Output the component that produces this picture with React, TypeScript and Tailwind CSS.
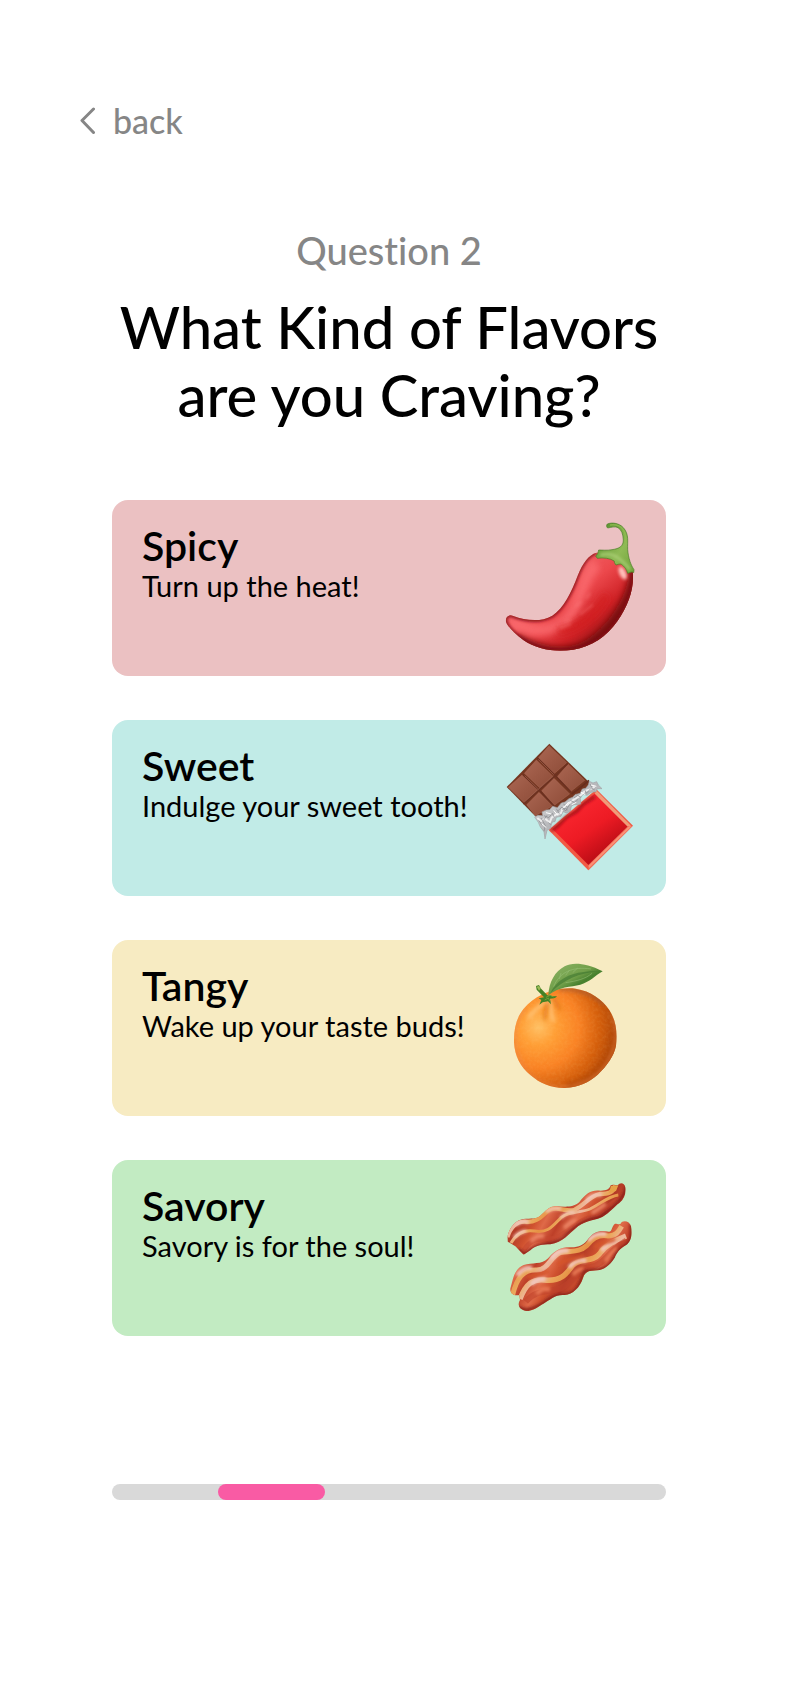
import type { ReactNode } from "react";

function Chili() {
  return (
    <svg viewBox="45 48 396 396" className="size-[132px]" aria-hidden="true">
      <defs>
        <linearGradient id="chili-body" gradientUnits="userSpaceOnUse" x1="190" y1="190" x2="370" y2="400">
          <stop offset="0" stopColor="#f4686c" />
          <stop offset=".4" stopColor="#ec484c" />
          <stop offset=".7" stopColor="#cf2226" />
          <stop offset="1" stopColor="#8c1214" />
        </linearGradient>
        <linearGradient id="chili-stem" x1="0" y1="0" x2="1" y2="1">
          <stop offset="0" stopColor="#4e8a27" />
          <stop offset=".6" stopColor="#8fba55" />
          <stop offset="1" stopColor="#6ea238" />
        </linearGradient>
        <clipPath id="chili-clip">
          <path d="M322 143C300 149 281 174 266 212C247 263 224 309 190 332C154 353 109 346 73 333C58 327 48 336 51 351C57 366 78 388 104 406C144 434 199 442 252 434C309 426 354 393 385 349C419 301 437 247 431 198C420 169 361 138 322 143Z" />
        </clipPath>
        <filter id="chili-soft" x="-30%" y="-30%" width="160%" height="160%">
          <feGaussianBlur stdDeviation="9" />
        </filter>
        <filter id="chili-edge" x="-30%" y="-30%" width="160%" height="160%">
          <feGaussianBlur stdDeviation="4" />
        </filter>
      </defs>
      <g clipPath="url(#chili-clip)">
        <path d="M30 120H450V450H30Z" fill="url(#chili-body)" />
        <path d="M80 398C140 434 200 447 259 435C328 419 430 311 438 185" fill="none" stroke="#6d0b0b" strokeWidth="30" filter="url(#chili-soft)" opacity=".85" />
        <path d="M64 350C124 381 176 386 223 350C276 310 274 222 323 177" fill="none" stroke="#fb6c70" strokeWidth="34" filter="url(#chili-soft)" opacity=".8" />
        <path d="M205 380C270 370 320 326 353 270" fill="none" stroke="#d21c1f" strokeWidth="27" filter="url(#chili-soft)" opacity=".65" />
        <path d="M259 306l18-16M274 328l38-29M226 351l20-8M213 370l34-13M292 281l12-17" fill="none" stroke="#ff8585" strokeWidth="7" filter="url(#chili-edge)" opacity=".35" />
        <ellipse cx="401" cy="204" rx="10" ry="21" transform="rotate(-25 401 204)" fill="#ffc0bb" filter="url(#chili-edge)" />
        <path d="M322 143C300 149 281 174 266 212C247 263 224 309 190 332C154 353 109 346 73 333C58 327 48 336 51 351C57 366 78 388 104 406C144 434 199 442 252 434C309 426 354 393 385 349C419 301 437 247 431 198" fill="none" stroke="#831014" strokeWidth="9" filter="url(#chili-edge)" />
      </g>
      <path d="M355 57C370 51 391 55 403 68C421 88 415 110 416 134C418 160 426 181 435 194L434 203C429 198 425 202 416 205C414 194 406 184 396 177C392 177 386 178 381 180C377 175 375 171 376 168C363 160 344 157 325 160L320 153C326 149 327 143 329 135C339 135 354 137 369 134C392 131 403 123 403 105C402 87 398 75 387 68C378 63 367 67 356 69C352 66 352 60 355 57Z" fill="url(#chili-stem)" stroke="#457b24" strokeWidth="2" />
      <path d="M334 150C357 144 376 149 389 160C403 170 414 179 422 194" fill="none" stroke="#add078" strokeWidth="7" filter="url(#chili-edge)" />
      <path d="M363 60C401 55 413 81 409 114" fill="none" stroke="#91bc51" strokeWidth="4" opacity=".8" />
    </svg>
  );
}

function Chocolate() {
  return (
    <svg viewBox="45 48 396 396" className="size-[132px]" aria-hidden="true">
      <defs>
        <linearGradient id="choc-square" x1="0" y1="0" x2="1" y2="1">
          <stop offset="0" stopColor="#aa6652" />
          <stop offset="1" stopColor="#8e4c38" />
        </linearGradient>
        <linearGradient id="choc-wrap" gradientUnits="userSpaceOnUse" x1="245" y1="240" x2="343" y2="382">
          <stop offset="0" stopColor="#fa2730" />
          <stop offset=".55" stopColor="#ed1b24" />
          <stop offset="1" stopColor="#c00e17" />
        </linearGradient>
        <linearGradient id="choc-foil" x1="0" y1="0" x2="1" y2="1">
          <stop offset="0" stopColor="#e9e9ea" />
          <stop offset=".5" stopColor="#b5b6b9" />
          <stop offset="1" stopColor="#e1e2e4" />
        </linearGradient>
        <filter id="choc-soft" x="-20%" y="-20%" width="140%" height="140%">
          <feGaussianBlur stdDeviation="4" />
        </filter>
      </defs>
      <path d="M181 56L303 174L285 205L155 290L53 186Z" fill="#753620" />
      <g fill="url(#choc-square)" stroke="#b57763" strokeWidth="1">
        <path d="M180 62L233 113L195 146L148 99Z" />
        <path d="M142 105L191 153L152 188L106 145Z" />
        <path d="M99 150L146 194L107 234L58 187Z" />
        <path d="M237 117L287 166L246 199L205 155Z" />
        <path d="M195 160L242 207L196 241L158 197Z" />
        <path d="M150 202L190 243L139 272L113 239Z" />
      </g>
      <path d="M103 237L152 193L197 154L236 116M145 98L198 151L246 201M102 149L154 199L198 246" fill="none" stroke="#6b3020" strokeWidth="4" />
      <path d="M106 231L149 192L193 153M148 103L194 149M107 152L149 193" fill="none" stroke="#a26350" strokeWidth="2" />
      <path d="M248 207L268 193L300 166" fill="none" stroke="#672d1d" strokeWidth="5" />
      <path d="M322 193L432 302L298 436L179 315Z" fill="#f25a45" />
      <path d="M322 202L418 303L299 421L191 313Z" fill="url(#choc-wrap)" />
      <path d="M323 197L426 302L416 305L317 206Z" fill="#f09b79" />
      <path d="M417 304L430 303L298 436L298 420Z" fill="#f16f58" />
      <path d="M420 304L428 304L300 429L299 422Z" fill="#fb9177" />
      <path d="M187 316L204 305L232 276L262 260L283 237L318 215" fill="none" stroke="#9d1018" strokeWidth="8" filter="url(#choc-soft)" />
      <path d="M137 276L147 271L161 272L159 261L172 255L182 254L191 244L205 248L217 234L228 231L240 221L251 217L258 209L273 205L280 192L290 190L298 180L301 169L312 174L323 170L328 180L339 191L325 191L321 200L306 202L294 211L282 208L274 220L275 237L264 239L255 239L247 244L244 258L234 264L222 260L216 274L202 277L198 290L190 291L183 311L174 316L168 342L165 320L154 306L148 292Z" fill="url(#choc-foil)" stroke="#a2a3a6" strokeWidth="2" strokeLinejoin="round" />
      <path d="M145 279L156 288L169 281L182 293L188 278L201 269L216 264L221 249L235 240L247 229L259 221L274 212L288 198L303 193L317 185" fill="none" stroke="#ededee" strokeWidth="6" strokeLinejoin="bevel" />
      <path d="M156 279L169 302L165 319M165 272L179 278L190 265L196 277M176 291L185 299M202 251L211 266M207 257L219 246L230 258L242 238M223 237L235 246M244 226L257 233L267 223M255 219L266 211L276 217M287 194L292 205L307 189L317 195M303 177L310 190M163 287L174 271M219 253L229 250L236 255M149 286L158 299" fill="none" stroke="#85868b" strokeWidth="2" strokeLinejoin="bevel" />
      <path d="M158 296L172 308M171 263L187 267M194 256L207 272M227 245L239 231M248 239L262 232M276 202L289 209M306 180L322 184" stroke="#fff" strokeWidth="3" />
    </svg>
  );
}

function Orange() {
  return (
    <svg viewBox="45 48 396 396" className="size-[132px]" aria-hidden="true">
      <defs>
        <radialGradient id="orange-skin" gradientUnits="userSpaceOnUse" cx="148" cy="247" r="245">
          <stop offset="0" stopColor="#ffc064" />
          <stop offset=".22" stopColor="#ff9e35" />
          <stop offset=".5" stopColor="#f98224" />
          <stop offset=".75" stopColor="#d45e0b" />
          <stop offset="1" stopColor="#a94308" />
        </radialGradient>
        <linearGradient id="orange-leaf" x1="0" y1="0" x2="1" y2="1">
          <stop offset="0" stopColor="#8db568" />
          <stop offset=".45" stopColor="#719f49" />
          <stop offset=".6" stopColor="#47802e" />
          <stop offset="1" stopColor="#70a850" />
        </linearGradient>
        <clipPath id="orange-clip">
          <path d="M158 149C179 139 218 126 260 131C305 138 341 164 361 195C381 226 386 262 381 302C375 333 354 362 326 389C299 413 269 426 228 429C187 430 154 416 125 391C94 366 77 333 75 292C74 248 84 215 104 191C120 172 139 157 158 149Z" />
        </clipPath>
        <filter id="orange-soft" x="-30%" y="-30%" width="160%" height="160%">
          <feGaussianBlur stdDeviation="6" />
        </filter>
        <filter id="orange-texture">
          <feTurbulence type="fractalNoise" baseFrequency=".11" numOctaves="2" seed="5" />
          <feColorMatrix values="0 0 0 0 1  0 0 0 0 .75  0 0 0 0 .35  .8 0 0 0 -.28" />
        </filter>
      </defs>
      <g clipPath="url(#orange-clip)">
        <path d="M70 120H390V435H70Z" fill="url(#orange-skin)" />
        <path d="M70 120H390V435H70Z" filter="url(#orange-texture)" opacity=".22" />
        <path d="M235 431C310 425 387 349 385 259" fill="none" stroke="#ad4300" strokeWidth="38" filter="url(#orange-soft)" opacity=".6" />
        <path d="M178 162C161 182 131 192 119 220M185 165C182 198 187 213 194 230" fill="none" stroke="#ffca82" strokeWidth="10" filter="url(#orange-soft)" />
        <path d="M176 171C173 192 165 205 168 226M192 160C204 171 202 183 215 193" fill="none" stroke="#d66913" strokeWidth="6" filter="url(#orange-soft)" />
        <path d="M111 187C65 236 64 317 112 377C154 431 248 449 323 390C374 346 397 267 370 207" fill="none" stroke="#ea884e" strokeWidth="5" filter="url(#orange-soft)" />
        <path d="M211 133C253 126 312 145 347 178" fill="none" stroke="#9c5735" strokeWidth="7" filter="url(#orange-soft)" />
      </g>
      <path d="M141 123L150 120L155 130L175 151C184 154 196 155 204 153C200 160 190 161 183 161L186 178L177 169L161 172L151 179L157 165L149 160L165 157L143 134Z" fill="#458125" />
      <path d="M143 125L150 123L155 131L150 137Z" fill="#9abb55" />
      <path d="M178 151C180 111 198 79 227 64C250 52 289 53 341 79C318 92 302 112 274 119C245 127 210 123 178 151Z" fill="url(#orange-leaf)" />
      <path d="M185 143C205 103 246 76 330 79C271 83 222 106 185 143Z" fill="#346d29" opacity=".5" />
      <path d="M194 125C210 83 250 63 306 72M230 113C263 108 289 102 309 85M211 102L216 84M230 91L241 76M251 83L266 69" fill="none" stroke="#9bc37c" strokeWidth="3" opacity=".5" />
      <path d="M171 157L183 151L194 156M167 165L178 159L183 169" fill="none" stroke="#719e37" strokeWidth="3" />
    </svg>
  );
}

function Bacon() {
  return (
    <svg viewBox="45 48 396 396" className="size-[132px]" aria-hidden="true">
      <defs>
        <linearGradient id="bacon-meat" gradientUnits="userSpaceOnUse" x1="75" y1="205" x2="165" y2="255" spreadMethod="reflect">
          <stop offset="0" stopColor="#b23a26" />
          <stop offset=".38" stopColor="#d0522f" />
          <stop offset=".62" stopColor="#df6a48" />
          <stop offset="1" stopColor="#bd3f28" />
        </linearGradient>
        <linearGradient id="bacon-fat" gradientUnits="userSpaceOnUse" x1="75" y1="180" x2="137" y2="220" spreadMethod="reflect">
          <stop offset="0" stopColor="#edb9a2" />
          <stop offset=".5" stopColor="#eba85c" />
          <stop offset="1" stopColor="#e69143" />
        </linearGradient>
        <filter id="bacon-soft" x="-20%" y="-20%" width="140%" height="140%">
          <feGaussianBlur stdDeviation="4" />
        </filter>
        <clipPath id="bacon-top">
          <path d="M55 215C61 190 76 169 95 164C116 158 139 165 153 153C171 137 180 123 204 123C225 126 254 128 271 111C292 84 308 73 335 77C352 77 361 73 365 61C373 56 379 62 386 61C393 51 406 52 409 67C412 83 406 102 391 114C376 124 364 142 341 155C319 166 293 165 267 184C239 207 222 232 184 238C161 238 141 240 125 255L104 269L79 244L56 230Z" />
        </clipPath>
        <clipPath id="bacon-bottom">
          <path d="M69 352C75 325 85 308 104 300C129 291 158 301 178 279C202 252 218 246 247 247C270 247 286 240 299 220C315 199 335 194 360 200C370 199 368 183 378 176C388 176 394 182 398 171C408 165 423 170 426 184C430 203 429 229 410 241C393 251 386 259 377 278C362 302 344 314 325 316C306 318 290 315 282 339C273 367 251 389 227 390C199 387 184 404 163 416C149 424 133 438 111 438C88 433 85 417 93 405L91 390C72 395 60 381 65 367Z" />
        </clipPath>
      </defs>
      <g clipPath="url(#bacon-top)">
        <path d="M45 45H430V275H45Z" fill="url(#bacon-meat)" />
        <path d="M55 216C65 186 83 169 108 170C141 175 157 154 176 138C203 119 232 144 257 134C286 121 302 93 332 87C357 86 373 84 379 62" fill="none" stroke="url(#bacon-fat)" strokeWidth="13" />
        <path d="M66 234C85 201 111 194 136 198C180 205 193 180 217 157C244 136 276 144 303 132C337 115 356 95 388 90" fill="none" stroke="url(#bacon-fat)" strokeWidth="9" />
        <path d="M80 181C92 170 103 165 119 173M171 140C184 131 199 126 216 132M215 160C228 145 244 140 257 143M292 107C304 92 321 87 338 90M75 218C85 206 97 200 112 198" fill="none" stroke="#f3c9c0" strokeWidth="9" filter="url(#bacon-soft)" />
        <path d="M104 257C130 209 173 226 200 218C243 200 260 169 303 157C342 144 361 111 399 99" fill="none" stroke="#c54730" strokeWidth="14" opacity=".6" />
        <path d="M125 229C142 214 151 212 165 214M225 189C238 176 247 169 260 164M308 144C326 136 338 124 350 116" stroke="#eb8465" strokeWidth="11" fill="none" filter="url(#bacon-soft)" />
        <path d="M87 253L109 267C139 233 191 245 224 220C261 179 293 162 331 158C373 128 409 101 411 62" fill="none" stroke="#7d1918" strokeWidth="8" filter="url(#bacon-soft)" />
        <path d="M366 63L360 84L381 78L388 61Z" fill="#e6a247" />
      </g>
      <g clipPath="url(#bacon-bottom)">
        <path d="M45 160H440V445H45Z" fill="url(#bacon-meat)" />
        <path d="M71 389C83 342 101 313 143 315C178 315 184 275 213 263C246 256 271 263 293 242C314 214 335 207 359 213C380 212 388 202 398 184" fill="none" stroke="url(#bacon-fat)" strokeWidth="15" />
        <path d="M93 402C111 355 132 341 166 345C218 351 234 324 251 301C273 278 310 293 331 267C352 237 380 226 411 213" fill="none" stroke="url(#bacon-fat)" strokeWidth="16" />
        <path d="M85 332C98 312 113 307 129 310M187 282C203 259 222 254 239 258M297 227C313 207 333 204 352 208M126 358C141 343 153 339 169 343M240 308C257 288 271 283 292 287M337 257C352 240 365 231 382 229" fill="none" stroke="#f2c8bf" strokeWidth="12" filter="url(#bacon-soft)" />
        <path d="M110 410C142 372 179 383 215 370C263 347 264 309 306 306C348 296 361 257 412 227" fill="none" stroke="#c0422b" strokeWidth="18" opacity=".6" />
        <path d="M143 387C159 368 169 371 183 373M252 330C260 318 271 312 284 312M349 289C360 272 370 259 385 250" fill="none" stroke="#e87954" strokeWidth="12" filter="url(#bacon-soft)" />
        <path d="M114 337C135 326 155 331 181 318M204 297C233 283 262 283 285 269M316 247C333 231 356 235 379 223" fill="none" stroke="#d55529" strokeWidth="9" filter="url(#bacon-soft)" />
        <path d="M87 426C112 445 140 427 164 414C187 396 201 391 229 390C267 386 275 348 286 320C307 312 340 323 364 298C382 275 380 258 403 246C434 231 427 203 427 178" fill="none" stroke="#831d19" strokeWidth="9" filter="url(#bacon-soft)" />
      </g>
    </svg>
  );
}

type Flavor = { name: string; tagline: string; color: string; art: ReactNode };

const flavors: Flavor[] = [
  { name: "Spicy", tagline: "Turn up the heat!", color: "bg-[#ebc1c2]", art: <Chili /> },
  { name: "Sweet", tagline: "Indulge your sweet tooth!", color: "bg-[#c1ebe7]", art: <Chocolate /> },
  { name: "Tangy", tagline: "Wake up your taste buds!", color: "bg-[#f7ebc2]", art: <Orange /> },
  { name: "Savory", tagline: "Savory is for the soul!", color: "bg-[#c2ebc2]", art: <Bacon /> },
];

function FlavorCard({ name, tagline, color, art }: Flavor) {
  return (
    <button type="button" className={`flex min-h-44 w-full items-start justify-between rounded-2xl px-[30px] text-left ${color}`}>
      <span className="flex flex-col pt-[26px]">
        <span className="text-[41px] leading-10 font-semibold">{name}</span>
        <span className="text-[29px] leading-10">{tagline}</span>
      </span>
      <span className="shrink-0 pt-[21px]">{art}</span>
    </button>
  );
}

export default function App() {
  return (
    <main className="min-h-screen bg-white pt-[101px] pb-16 font-['Lato',sans-serif] text-black [font-variant-ligatures:none]">
      <nav className="pl-20">
        <button type="button" className="flex items-center gap-[18px] text-[34px] leading-10 font-medium text-[#868686]">
          <svg viewBox="0 0 15 28" className="h-7 w-[15px]" fill="none" stroke="currentColor" strokeWidth="3" strokeLinecap="round" strokeLinejoin="round" aria-hidden="true">
            <path d="M13.5 2 2 13.5l11.5 12" />
          </svg>
          back
        </button>
      </nav>
      <div className="pr-[120px] pl-28">
        <header className="flex flex-col gap-5 pt-[86px] text-center">
          <p className="text-[38px] leading-[46px] font-medium text-[#868686]">Question 2</p>
          <h1 className="text-[58px] leading-[68px] font-medium">
            What Kind of Flavors
            <br />
            are you Craving?
          </h1>
        </header>
        <div className="flex flex-col gap-11 pt-[71px]">
          {flavors.map((flavor) => (
            <FlavorCard key={flavor.name} {...flavor} />
          ))}
        </div>
        <div role="progressbar" aria-label="Quiz progress" aria-valuenow={2} aria-valuemin={1} aria-valuemax={5} className="mt-[148px] h-4 rounded-full bg-[#d9d9d9]">
          <div className="ml-[19.2%] h-4 w-[19.2%] rounded-full bg-[#f95ba4]" />
        </div>
      </div>
    </main>
  );
}
